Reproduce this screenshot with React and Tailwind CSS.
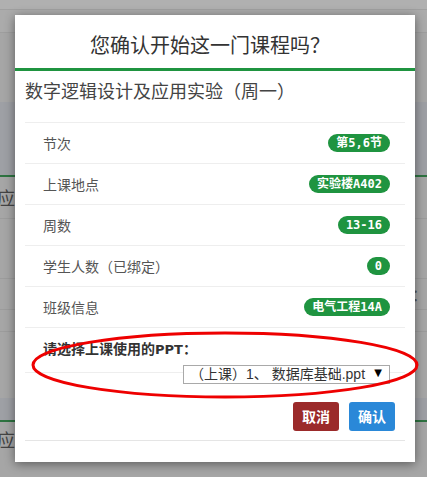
const rows = [
  { label: '节次', badge: '第5,6节' },
  { label: '上课地点', badge: '实验楼A402' },
  { label: '周数', badge: '13-16' },
  { label: '学生人数（已绑定）', badge: '0' },
  { label: '班级信息', badge: '电气工程14A' },
];

const cjk = { fontFamily: '"Noto Sans CJK SC", "Liberation Sans", sans-serif' };
const mono = { fontFamily: '"DejaVu Sans Mono", "Noto Sans CJK SC", monospace' };

export default function App() {
  return (
    <div className="relative w-[427px] h-[477px] overflow-hidden bg-[#a6a6a6]" style={cjk}>
      {/* page behind the backdrop */}
      <div className="flex flex-col">
        <div className="h-[10px] bg-[#b0b0b0] border-b border-[#a0a0a0]"></div>
        <div className="h-[23px] bg-[#ababab] border-b border-[#9e9e9e]"></div>
        <div className="h-[69px]"></div>
        <div className="h-[73px] bg-[#9ea0a5]"></div>
        <div className="h-[2px] bg-[#2e7341]"></div>
        <div className="h-[42px] flex items-center justify-between border-b border-[#9c9c9c] text-[18px] text-[#444]">
          <span className="-ml-[3px]">应</span>
          <span></span>
        </div>
        <div className="h-[60px] border-b border-[#9c9c9c]"></div>
        <div className="h-[31px] border-b border-[#9c9c9c] flex items-center justify-end text-[16px] text-[#555]">
          <span className="-mr-[6px]">：(</span>
        </div>
        <div className="h-[22px] border-b border-[#9c9c9c]"></div>
        <div className="h-[66px]"></div>
        <div className="h-[22px] bg-[#9ea0a5]"></div>
        <div className="h-[2px] bg-[#2e7341]"></div>
        <div className="h-[34px] flex items-center text-[18px] text-[#444]">
          <span className="-ml-[3px]">应</span>
        </div>
      </div>

      {/* modal */}
      <div className="absolute left-[15px] top-[15px] w-[400px] h-[447px] bg-white shadow-[0_2px_10px_rgba(0,0,0,0.45)] flex flex-col">
        <div className="h-[53px] flex items-center justify-center pr-[10px] pt-[6px] text-[20px] text-[#333]">
          您确认开始这一门课程吗？
        </div>
        <div className="h-[3px] bg-[#1f9440]"></div>
        <div className="px-[10px] flex flex-col">
          <div className="h-[51px] flex items-start pt-[6px] text-[18px] text-[#444] leading-[26px]">
            数字逻辑设计及应用实验（周一）
          </div>
          {rows.map((r) => (
            <div key={r.label} className="h-[41px] border-t border-[#eeeeee] flex items-center justify-between pl-[18px] pr-[15px]">
              <span className="text-[14px] text-[#555]">{r.label}</span>
              <span className="h-[18px] px-[8px] rounded-full bg-[#1f9440] text-white text-[12px] font-bold flex items-center leading-none" style={mono}>
                {r.badge}
              </span>
            </div>
          ))}
          <div className="h-[46px] border-t border-b border-[#eeeeee] flex flex-col pl-[18px] pr-[15px]">
            <div className="pt-[10px] text-[14px] font-bold text-[#333] leading-[20px]">
              请选择上课使用的<span style={{ fontFamily: '"DejaVu Sans", sans-serif' }} className="text-[13px]">PPT</span>：
            </div>
            <div className="flex justify-end mt-[5px]">
              <div className="relative w-[207px] h-[19px] border border-[#a9a9a9] bg-white flex items-center pl-[6px] text-[14px] text-[#333]" style={{ fontFamily: '"Liberation Sans", "Noto Sans CJK SC", sans-serif' }}>
                <span>（上课）1、 数据库基础.ppt</span>
                <span className="absolute right-[7px] top-[1px] text-[10px] leading-[12px] text-black" style={{ fontFamily: '"DejaVu Sans", sans-serif' }}>▼</span>
              </div>
            </div>
          </div>
          <div className="h-[68px] flex items-start justify-end gap-[10px] pt-[29px] pr-[10px] border-b border-[#e5e5e5]">
            <button className="w-[46px] h-[29px] rounded-[3px] bg-[#9b2a2a] text-white text-[14px] font-bold">取消</button>
            <button className="w-[46px] h-[29px] rounded-[3px] bg-[#2a88d8] text-white text-[14px] font-bold">确认</button>
          </div>
        </div>
      </div>

      {/* red annotation */}
      <svg className="absolute left-0 top-0 pointer-events-none" width="427" height="477">
        <ellipse cx="225" cy="365" rx="192" ry="32" fill="none" stroke="#ee0000" strokeWidth="3" />
      </svg>
    </div>
  );
}
